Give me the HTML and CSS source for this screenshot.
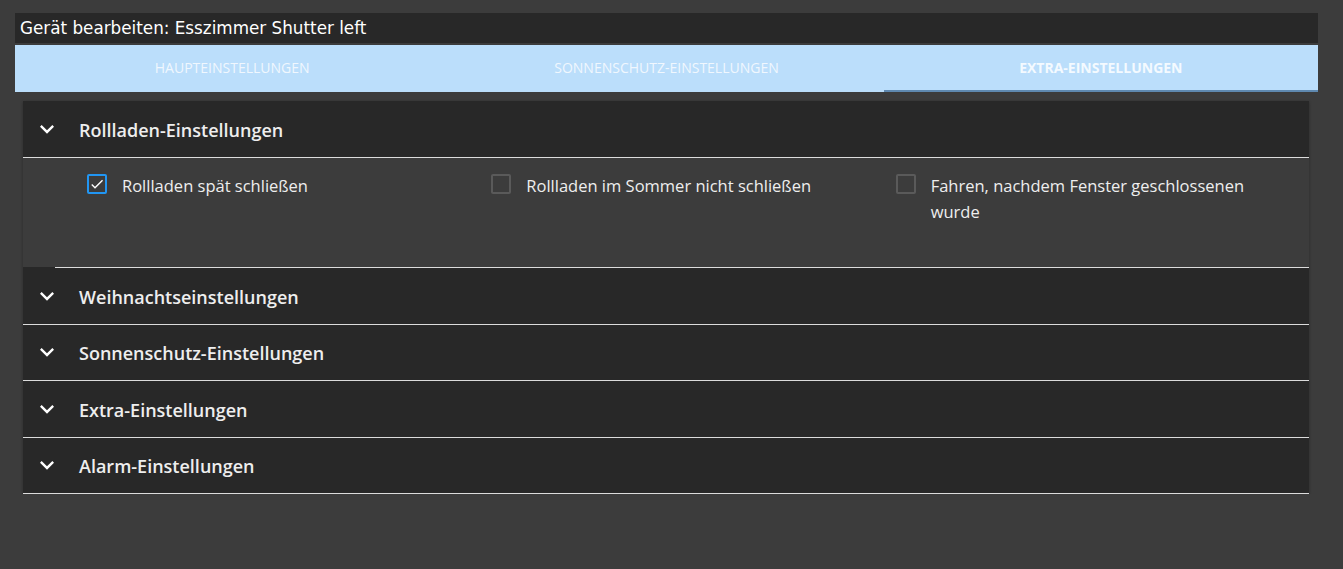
FILE: index.html
```html
<!DOCTYPE html>
<html lang="de">
<head>
  <meta charset="UTF-8">
  <title>Gerät bearbeiten</title>
  <link rel="stylesheet" href="styles.css">
</head>
<body>
  <div class="dialog">
    <!-- Dialog title -->
    <div class="dialog-title">Gerät bearbeiten: Esszimmer Shutter left</div>

    <!-- Tabs -->
    <div class="tabs">
      <div class="tab">Haupteinstellungen</div>
      <div class="tab">Sonnenschutz-Einstellungen</div>
      <div class="tab active">Extra-Einstellungen</div>
    </div>

    <!-- Accordion -->
    <div class="accordion">
      <div class="panel open">
        <div class="panel-header">
          <svg class="chevron" viewBox="0 0 24 24"><path d="M16.59 8.59L12 13.17 7.41 8.59 6 10l6 6 6-6z"/></svg>
          <span>Rollladen-Einstellungen</span>
        </div>
        <div class="panel-body">
          <label class="check">
            <span class="box checked">
              <svg viewBox="0 0 24 24"><path d="M9 16.17L4.83 12l-1.42 1.41L9 19 21 7l-1.41-1.41z"/></svg>
            </span>
            <span>Rollladen spät schließen</span>
          </label>
          <label class="check">
            <span class="box"></span>
            <span>Rollladen im Sommer nicht schließen</span>
          </label>
          <label class="check">
            <span class="box"></span>
            <span>Fahren, nachdem Fenster geschlossenen wurde</span>
          </label>
        </div>
        <div class="panel-divider"></div>
      </div>

      <div class="panel">
        <div class="panel-header">
          <svg class="chevron" viewBox="0 0 24 24"><path d="M16.59 8.59L12 13.17 7.41 8.59 6 10l6 6 6-6z"/></svg>
          <span>Weihnachtseinstellungen</span>
        </div>
      </div>

      <div class="panel">
        <div class="panel-header">
          <svg class="chevron" viewBox="0 0 24 24"><path d="M16.59 8.59L12 13.17 7.41 8.59 6 10l6 6 6-6z"/></svg>
          <span>Sonnenschutz-Einstellungen</span>
        </div>
      </div>

      <div class="panel">
        <div class="panel-header">
          <svg class="chevron" viewBox="0 0 24 24"><path d="M16.59 8.59L12 13.17 7.41 8.59 6 10l6 6 6-6z"/></svg>
          <span>Extra-Einstellungen</span>
        </div>
      </div>

      <div class="panel">
        <div class="panel-header">
          <svg class="chevron" viewBox="0 0 24 24"><path d="M16.59 8.59L12 13.17 7.41 8.59 6 10l6 6 6-6z"/></svg>
          <span>Alarm-Einstellungen</span>
        </div>
      </div>
    </div>
  </div>
</body>
</html>
```

FILE: styles.css
```css
/* Dark dialog styling */
body {
  background-color: #3c3c3c;
  color: #eeeeee;
  font-family: "Open Sans", sans-serif;
  margin: 0;
  padding: 13px 25px 0 15px;
}

.dialog-title {
  background-color: #282828;
  color: #ffffff;
  font-family: "DejaVu Sans", sans-serif;
  font-size: 16.8px;
  height: 30px;
  line-height: 30px;
  padding-left: 5px;
  margin-bottom: 2px;
}

/* Tabs */
.tabs {
  display: flex;
  background-color: #bbdefb;
  height: 47px;
}

.tab {
  flex: 1;
  display: flex;
  align-items: center;
  justify-content: center;
  text-transform: uppercase;
  font-size: 14px;
  font-weight: 500;
  color: #f0f7fe;
  box-sizing: border-box;
  padding-bottom: 2px;
}

.tab.active {
  font-weight: 700;
  color: #f4faff;
  border-bottom: 2px solid #5f89b0;
  padding-bottom: 0;
}

/* Accordion */
.accordion {
  margin: 9px 9px 0 8px;
  background-color: #282828;
  box-shadow: 0 1px 3px rgba(0, 0, 0, 0.3);
}

.panel-header {
  display: flex;
  align-items: center;
  height: 55.5px;
  border-bottom: 1px solid #dcdcdc;
  padding-left: 10px;
  font-size: 18px;
  font-weight: 600;
  color: #eeeeee;
}

.panel.open .panel-header {
  height: 56px;
}

.panel-header span {
  padding-top: 2px;
}

.chevron {
  width: 28px;
  height: 28px;
  fill: #ffffff;
  margin-right: 18px;
}

.panel-body {
  background-color: #3c3c3c;
  display: grid;
  grid-template-columns: repeat(3, 1fr);
  padding: 15px 9px 0 64px;
  height: 94px;
}

.panel-divider {
  height: 1px;
  margin-left: 32px;
  background-color: #dcdcdc;
}

/* Checkboxes */
.check {
  display: flex;
  align-items: flex-start;
  padding-right: 16px;
  font-size: 16.5px;
  font-weight: 500;
  line-height: 26px;
  color: #eeeeee;
}

.box {
  flex: none;
  width: 16px;
  height: 16px;
  border: 2px solid #5a5a5a;
  border-radius: 2px;
  margin: 1px 15px 0 0;
  display: flex;
  align-items: center;
  justify-content: center;
}

.box.checked {
  border-color: #2196f3;
}

.box svg {
  width: 18px;
  height: 18px;
  fill: #ffffff;
}
```
